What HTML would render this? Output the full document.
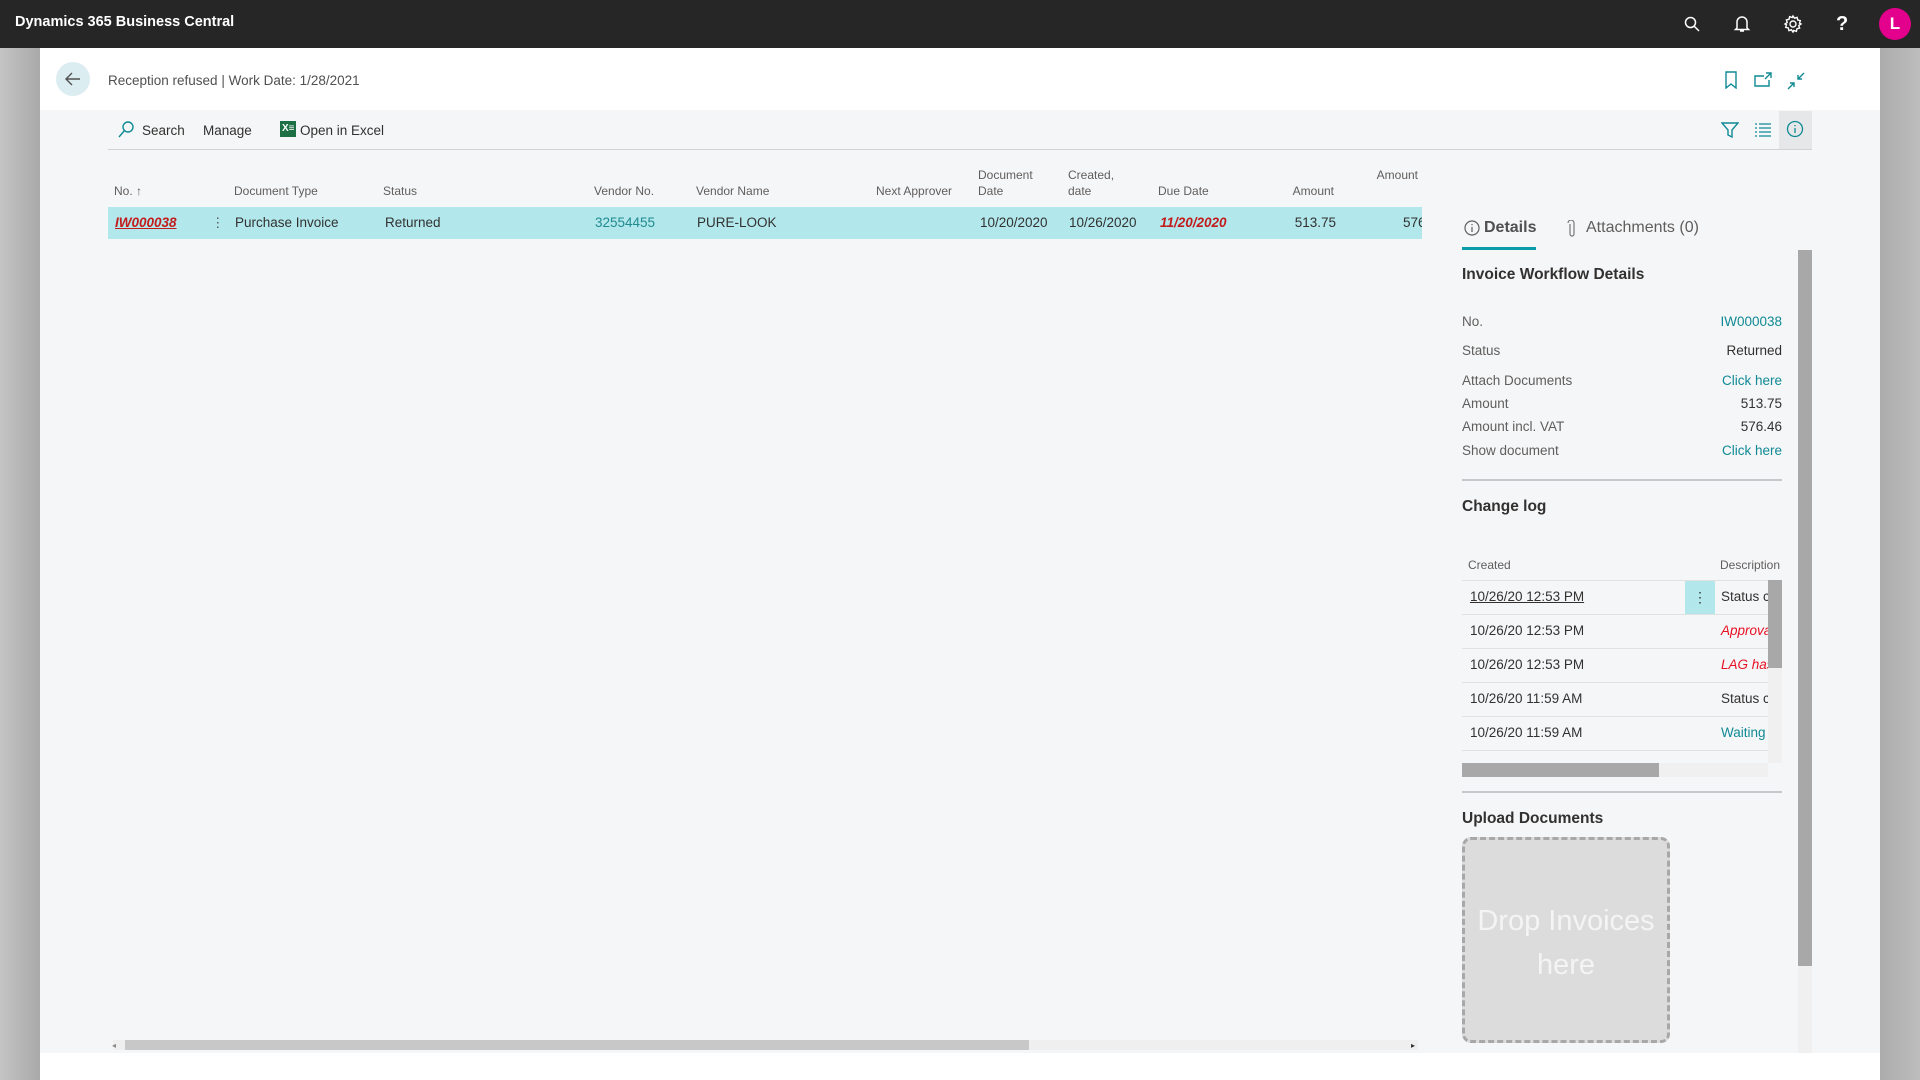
<!DOCTYPE html>
<html><head><meta charset="utf-8"><style>
*{margin:0;padding:0;box-sizing:border-box}
body{width:1920px;height:1080px;overflow:hidden;position:relative;font-family:"Liberation Sans",sans-serif;background:#fff;color:#323130}
.a{position:absolute;white-space:nowrap}
.top{left:0;top:0;width:1920px;height:48px;background:#262626}
.gl{left:0;top:48px;width:40px;height:1032px;background:linear-gradient(90deg,#c4c4c4,#a9a9a9)}
.gr{left:1880px;top:48px;width:40px;height:1032px;background:linear-gradient(90deg,#acacac,#bdbdbd)}
.hdr{left:40px;top:48px;width:1840px;height:62px;background:#fff}
.cnt{left:40px;top:110px;width:1840px;height:943px;background:#f5f6f8}
.bot{left:40px;top:1053px;width:1840px;height:27px;background:#fff}
.tb{font-size:13.5px;color:#323130}
.ch{font-size:12px;color:#605e5c;line-height:16px}
.rw{font-size:13.5px;color:#323130;top:215px}
.lbl{font-size:13.5px;color:#605e5c;left:1462px}
.val{font-size:13.5px;color:#323130;right:138px}
.lnk{color:#0f8a94}
.cl{font-size:13.5px;color:#323130;left:1470px}
.line{background:#e1e1e1;height:1px;left:1462px;width:306px}
</style></head><body>
<div class="a top"></div>
<div class="a" style="left:15px;top:14px;color:#fff;font-weight:bold;font-size:14.5px">Dynamics 365 Business Central</div>
<svg class="a" style="left:1683px;top:15px" width="18" height="18" viewBox="0 0 18 18" fill="none" stroke="#fff" stroke-width="1.5"><circle cx="7.5" cy="7.5" r="5"/><path d="M11 11l5 5"/></svg>
<svg class="a" style="left:1733px;top:14px" width="18" height="20" viewBox="0 0 18 20" fill="none" stroke="#fff" stroke-width="1.5"><path d="M4 14V8a5 5 0 0110 0v6l1.5 1.5h-13z M7 17h4"/></svg>
<svg class="a" style="left:1783px;top:14px" width="20" height="20" viewBox="0 0 20 20" fill="none" stroke="#fff" stroke-width="1.4"><circle cx="10" cy="10" r="3"/><path d="M10 2l1.5 2.2 2.6-.8.6 2.6 2.6.6-.8 2.6L18 10l-2.2 1.5.8 2.6-2.6.6-.6 2.6-2.6-.8L10 18l-1.5-2.2-2.6.8-.6-2.6-2.6-.6.8-2.6L2 10l2.2-1.5-.8-2.6 2.6-.6.6-2.6 2.6.8z"/></svg>
<div class="a" style="left:1836px;top:13px;color:#fff;font-weight:bold;font-size:20px">?</div>
<div class="a" style="left:1879px;top:8px;width:32px;height:32px;border-radius:50%;background:#e3008c;color:#fff;font-weight:bold;font-size:17px;text-align:center;line-height:32px">L</div>
<div class="a gl"></div><div class="a gr"></div>
<div class="a hdr"></div><div class="a cnt"></div><div class="a bot"></div>
<div class="a" style="left:56px;top:62px;width:34px;height:34px;border-radius:50%;background:#dcedf1"></div>
<svg class="a" style="left:64px;top:71px" width="18" height="16" viewBox="0 0 18 16" fill="none" stroke="#505050" stroke-width="1.4"><path d="M16 8H2M8 2L2 8l6 6"/></svg>
<div class="a" style="left:108px;top:73px;font-size:13.5px;color:#505050">Reception refused | Work Date: 1/28/2021</div>
<svg class="a" style="left:1724px;top:71px" width="14" height="18" viewBox="0 0 14 18" fill="none" stroke="#0f8a94" stroke-width="1.4"><path d="M2 1h10v16l-5-4-5 4z"/></svg>
<svg class="a" style="left:1754px;top:72px" width="18" height="16" viewBox="0 0 18 16" fill="none" stroke="#0f8a94" stroke-width="1.4"><path d="M10 4H1v10h14V8M12 1h5v5M17 1l-6 6"/></svg>
<svg class="a" style="left:1787px;top:72px" width="18" height="18" viewBox="0 0 18 18" fill="none" stroke="#0f8a94" stroke-width="1.4"><path d="M17 1l-6 6M11 3v4h4M1 17l6-6M3 11h4v4"/></svg>
<!-- toolbar -->
<svg class="a" style="left:118px;top:121px" width="16" height="18" viewBox="0 0 16 18" fill="none" stroke="#0f8a94" stroke-width="1.4"><circle cx="10" cy="6" r="5"/><path d="M6.5 9.5L1 16"/></svg>
<div class="a tb" style="left:142px;top:123px">Search</div>
<div class="a tb" style="left:203px;top:123px">Manage</div>
<div class="a" style="left:280px;top:121px;width:16px;height:16px;background:#1d7044;color:#fff;font-size:10px;font-weight:bold;line-height:16px;padding-left:2px">X≡</div>
<div class="a tb" style="left:300px;top:123px">Open in Excel</div>
<div class="a" style="left:108px;top:149px;width:1704px;height:1px;background:#d2d2d2"></div>
<svg class="a" style="left:1721px;top:121px" width="18" height="18" viewBox="0 0 18 18" fill="none" stroke="#0f8a94" stroke-width="1.4"><path d="M1 2h16l-6 7v7l-4-2V9z"/></svg>
<svg class="a" style="left:1755px;top:123px" width="16" height="14" viewBox="0 0 16 14" fill="none" stroke="#0f8a94" stroke-width="1.3"><path d="M0 1h2M4 1h12M0 5h2M4 5h12M0 9h2M4 9h12M0 13h2M4 13h12"/></svg>
<div class="a" style="left:1779px;top:111px;width:33px;height:38px;background:#e6e7e9"></div>
<svg class="a" style="left:1786px;top:120px" width="18" height="18" viewBox="0 0 18 18" fill="none" stroke="#0f8a94" stroke-width="1.3"><circle cx="9" cy="9" r="7.5"/><path d="M9 8v5M9 5v1.2"/></svg>
<!-- column headers -->
<div class="a ch" style="left:114px;top:183px">No. ↑</div>
<div class="a ch" style="left:234px;top:183px">Document Type</div>
<div class="a ch" style="left:383px;top:183px">Status</div>
<div class="a ch" style="left:594px;top:183px">Vendor No.</div>
<div class="a ch" style="left:696px;top:183px">Vendor Name</div>
<div class="a ch" style="left:876px;top:183px">Next Approver</div>
<div class="a ch" style="left:978px;top:167px">Document<br>Date</div>
<div class="a ch" style="left:1068px;top:167px">Created,<br>date</div>
<div class="a ch" style="left:1158px;top:183px">Due Date</div>
<div class="a ch" style="right:586px;top:183px">Amount</div>
<div class="a ch" style="right:502px;top:167px">Amount</div>
<div class="a" style="left:108px;top:207px;width:1314px;height:32px;background:#b2e8ec"></div>
<div class="a rw" style="left:115px;color:#c21c1c;font-weight:bold;font-style:italic;text-decoration:underline">IW000038</div>
<div class="a rw" style="left:211px;color:#555">⋮</div>
<div class="a rw" style="left:235px">Purchase Invoice</div>
<div class="a rw" style="left:385px">Returned</div>
<div class="a rw" style="left:595px;color:#1f8a8f">32554455</div>
<div class="a rw" style="left:697px">PURE-LOOK</div>
<div class="a rw" style="left:980px">10/20/2020</div>
<div class="a rw" style="left:1069px">10/26/2020</div>
<div class="a rw" style="left:1160px;color:#c21c1c;font-weight:bold;font-style:italic">11/20/2020</div>
<div class="a rw" style="right:584px">513.75</div>
<div class="a rw" style="left:1403px;width:19px;overflow:hidden">576.46</div>
<!-- bottom scrollbar -->
<div class="a" style="left:113px;top:1040px;width:1305px;height:10px;background:#efefef"></div>
<div class="a" style="left:125px;top:1040px;width:904px;height:10px;background:#c8c8c8"></div>
<div class="a" style="left:112px;top:1041px;font-size:8px;color:#888">◂</div>
<div class="a" style="left:1411px;top:1041px;font-size:8px;color:#333">▸</div>
<!-- right panel -->
<svg class="a" style="left:1464px;top:220px" width="16" height="16" viewBox="0 0 16 16" fill="none" stroke="#605e5c" stroke-width="1.2"><circle cx="8" cy="8" r="7"/><path d="M8 7v5M8 4v1.2"/></svg>
<div class="a" style="left:1484px;top:219px;font-size:16px;font-weight:bold;color:#505050">Details</div>
<div class="a" style="left:1462px;top:247px;width:74px;height:3px;background:#0a9ba8"></div>
<svg class="a" style="left:1567px;top:220px" width="10" height="18" viewBox="0 0 10 18" fill="none" stroke="#777" stroke-width="1.2"><path d="M3 4v10a2 2 0 004 0V3a3 3 0 00-6 0"/></svg>
<div class="a" style="left:1586px;top:219px;font-size:16px;color:#605e5c">Attachments (0)</div>
<div class="a" style="left:1798px;top:250px;width:14px;height:716px;background:#a8a8a8"></div>
<div class="a" style="left:1798px;top:966px;width:14px;height:87px;background:#f0f0f0"></div>
<div class="a" style="left:1462px;top:266px;font-size:15.5px;font-weight:bold;color:#323130">Invoice Workflow Details</div>
<div class="a lbl" style="top:314px">No.</div><div class="a val lnk" style="top:314px">IW000038</div>
<div class="a lbl" style="top:343px">Status</div><div class="a val" style="top:343px">Returned</div>
<div class="a lbl" style="top:373px">Attach Documents</div><div class="a val lnk" style="top:373px">Click here</div>
<div class="a lbl" style="top:396px">Amount</div><div class="a val" style="top:396px">513.75</div>
<div class="a lbl" style="top:419px">Amount incl. VAT</div><div class="a val" style="top:419px">576.46</div>
<div class="a lbl" style="top:443px">Show document</div><div class="a val lnk" style="top:443px">Click here</div>
<div class="a" style="left:1462px;top:479px;width:320px;height:2px;background:#c8c8cc"></div>
<div class="a" style="left:1462px;top:498px;font-size:15.5px;font-weight:bold;color:#323130">Change log</div>
<div class="a" style="left:1468px;top:558px;font-size:12px;color:#605e5c">Created</div>
<div class="a" style="left:1720px;top:558px;font-size:12px;color:#605e5c">Description</div>
<div class="a line" style="top:580px"></div>
<div class="a" style="left:1685px;top:581px;width:30px;height:33px;background:#b2e8ec;color:#333;text-align:center;line-height:33px;font-size:14px">⋮</div>
<div class="a cl" style="top:589px;text-decoration:underline">10/26/20 12:53 PM</div>
<div class="a cl" style="left:1721px;top:589px">Status c</div>
<div class="a line" style="top:614px"></div>
<div class="a cl" style="top:623px">10/26/20 12:53 PM</div>
<div class="a cl" style="left:1721px;top:623px;color:#e81123;font-style:italic">Approva</div>
<div class="a line" style="top:648px"></div>
<div class="a cl" style="top:657px">10/26/20 12:53 PM</div>
<div class="a cl" style="left:1721px;top:657px;color:#e81123;font-style:italic">LAG has</div>
<div class="a line" style="top:682px"></div>
<div class="a cl" style="top:691px">10/26/20 11:59 AM</div>
<div class="a cl" style="left:1721px;top:691px">Status c</div>
<div class="a line" style="top:716px"></div>
<div class="a cl" style="top:725px">10/26/20 11:59 AM</div>
<div class="a cl" style="left:1721px;top:725px;color:#0f8a94">Waiting</div>
<div class="a line" style="top:750px"></div>
<div class="a" style="left:1768px;top:580px;width:14px;height:183px;background:#f0f0f0"></div>
<div class="a" style="left:1768px;top:580px;width:14px;height:88px;background:#a8a8a8"></div>
<div class="a" style="left:1462px;top:763px;width:306px;height:14px;background:#f0f0f0"></div>
<div class="a" style="left:1462px;top:763px;width:197px;height:14px;background:#a8a8a8"></div>
<div class="a" style="left:1462px;top:791px;width:320px;height:2px;background:#c8c8cc"></div>
<div class="a" style="left:1462px;top:810px;font-size:15.5px;font-weight:bold;color:#323130">Upload Documents</div>
<div class="a" style="left:1462px;top:837px;width:208px;height:206px;background:#dcdcdc;border:3px dashed #a8a8a8;border-radius:9px"></div>
<div class="a" style="left:1462px;top:899px;width:208px;text-align:center;color:#f4f4f4;font-size:29px;line-height:44px;white-space:normal">Drop Invoices here</div>
</body></html>
